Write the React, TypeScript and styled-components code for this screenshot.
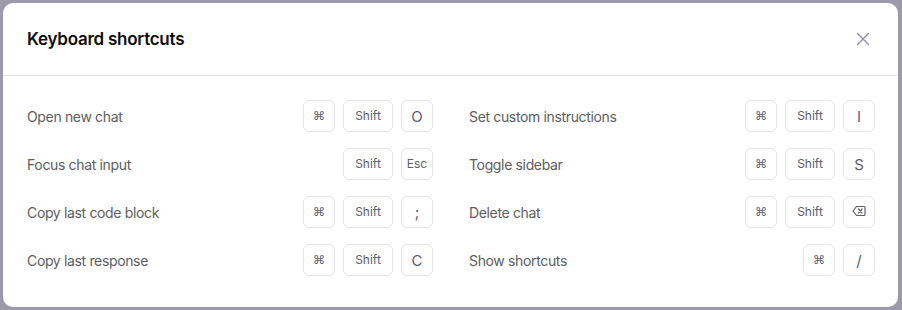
import React from 'react';
import styled, { createGlobalStyle } from 'styled-components';

const GlobalStyle = createGlobalStyle`
  html, body {
    margin: 0;
    padding: 0;
    background: #9b99aa;
    font-family: Inter, "Liberation Sans", sans-serif;
  }
  * {
    box-sizing: border-box;
  }
`;

const Overlay = styled.div`
  width: 902px;
  height: 310px;
  padding: 3px 4px 3px 3px;
  display: flex;
`;

const Dialog = styled.div`
  flex: 1;
  background: #fff;
  border-radius: 10px;
  display: flex;
  flex-direction: column;
`;

const Header = styled.div`
  height: 73px;
  padding: 0 24px;
  display: flex;
  align-items: center;
  justify-content: space-between;
  border-bottom: 1px solid #e3e3e3;
`;

const Title = styled.h2`
  margin: 0;
  font-size: 17px;
  font-weight: 600;
  color: #0d0d0d;
  letter-spacing: -0.25px;
`;

const CloseButton = styled.button`
  border: none;
  background: none;
  padding: 0;
  margin-right: 2px;
  display: flex;
  color: #8e8ea0;
  cursor: pointer;
`;

const Body = styled.div`
  padding: 24px 23px 30px 24px;
  display: grid;
  grid-template-columns: 1fr 1fr;
  column-gap: 36px;
  row-gap: 16px;
`;

const Row = styled.div`
  display: flex;
  align-items: center;
  justify-content: space-between;
  height: 32px;
`;

const Label = styled.span`
  font-size: 14px;
  color: #5d5d5d;
  letter-spacing: -0.35px;
`;

const Keys = styled.div`
  display: flex;
  gap: 8px;
`;

const Key = styled.kbd<{ $wide?: boolean }>`
  width: ${(p) => (p.$wide ? '50px' : '32px')};
  height: 32px;
  border: 1px solid #e5e5e5;
  border-radius: 6px;
  display: flex;
  align-items: center;
  justify-content: center;
  font-family: Inter, "Liberation Sans", sans-serif;
  font-size: 12px;
  color: #5d5d6b;
  padding-bottom: 2px;
`;

const BigKey = styled(Key)`
  font-size: 15px;
  padding-bottom: 0;
  padding-top: 1px;
`;

const CmdGlyph = styled.span`
  font-family: "DejaVu Sans", sans-serif;
  font-size: 12px;
  color: #5d5d6b;
  margin-top: 2px;
`;

const Backspace = () => (
  <svg width="14" height="12" viewBox="0 0 14 12" fill="none" stroke="#5d5d6b" strokeWidth="1.2" strokeLinejoin="round">
    <path d="M4.5 1.5h7.5a1 1 0 0 1 1 1v7a1 1 0 0 1-1 1H4.5L1 6z" />
    <path d="M6.5 4l3.5 4M10 4l-3.5 4" strokeLinecap="round" />
  </svg>
);

type K = { k: string; wide?: boolean; big?: boolean; icon?: 'cmd' | 'back' };

const cmd: K = { k: '⌘', icon: 'cmd' };
const shift: K = { k: 'Shift', wide: true };

const left: { label: string; keys: K[] }[] = [
  { label: 'Open new chat', keys: [cmd, shift, { k: 'O', big: true }] },
  { label: 'Focus chat input', keys: [shift, { k: 'Esc' }] },
  { label: 'Copy last code block', keys: [cmd, shift, { k: ';', big: true }] },
  { label: 'Copy last response', keys: [cmd, shift, { k: 'C', big: true }] },
];

const right: { label: string; keys: K[] }[] = [
  { label: 'Set custom instructions', keys: [cmd, shift, { k: 'I', big: true }] },
  { label: 'Toggle sidebar', keys: [cmd, shift, { k: 'S', big: true }] },
  { label: 'Delete chat', keys: [cmd, shift, { k: 'Backspace', icon: 'back' }] },
  { label: 'Show shortcuts', keys: [cmd, { k: '/', big: true }] },
];

const renderKey = (key: K, i: number) => {
  if (key.icon === 'cmd') {
    return (
      <Key key={i}>
        <CmdGlyph>⌘</CmdGlyph>
      </Key>
    );
  }
  if (key.icon === 'back') {
    return (
      <Key key={i} aria-label="Backspace">
        <Backspace />
      </Key>
    );
  }
  if (key.big) return <BigKey key={i}>{key.k}</BigKey>;
  return (
    <Key key={i} $wide={key.wide}>
      {key.k}
    </Key>
  );
};

const App: React.FC = () => {
  const rows = [];
  for (let i = 0; i < 4; i++) {
    rows.push(left[i], right[i]);
  }

  return (
    <>
      <GlobalStyle />
      <Overlay>
        <Dialog>
          <Header>
            <Title>Keyboard shortcuts</Title>
            <CloseButton aria-label="Close">
              <svg width="18" height="18" viewBox="0 0 18 18" fill="none" stroke="currentColor" strokeWidth="1.4" strokeLinecap="round">
                <path d="M3.5 3.5l11 11M14.5 3.5l-11 11" />
              </svg>
            </CloseButton>
          </Header>
          <Body>
            {rows.map((r) => (
              <Row key={r.label}>
                <Label>{r.label}</Label>
                <Keys>{r.keys.map(renderKey)}</Keys>
              </Row>
            ))}
          </Body>
        </Dialog>
      </Overlay>
    </>
  );
};

export default App;
